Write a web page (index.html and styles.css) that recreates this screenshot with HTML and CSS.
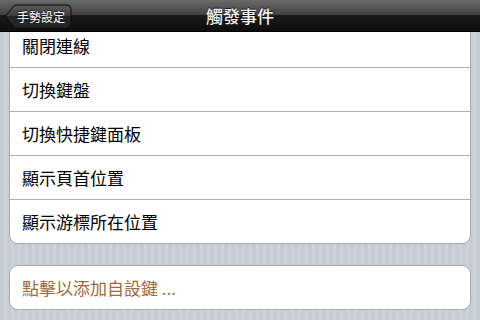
FILE: index.html
```html
<!DOCTYPE html>
<html lang="zh-Hant">
<head>
<meta charset="utf-8">
<link rel="stylesheet" href="styles.css">
</head>
<body>
<div class="screen">
  <header class="navbar">
    <button class="back">
      <svg class="back-shape" width="68" height="25" viewBox="0 0 68 25">
        <defs>
          <linearGradient id="bg" x1="0" y1="0" x2="0" y2="1">
            <stop offset="0" stop-color="#5a5a5a"/>
            <stop offset="0.5" stop-color="#3a3a3a"/>
            <stop offset="0.5" stop-color="#242424"/>
            <stop offset="1" stop-color="#262626"/>
          </linearGradient>
        </defs>
        <path d="M1.3 12.5 L10.8 1 H63 Q67 1 67 5 V20 Q67 24 63 24 H10.8 Z" fill="url(#bg)" stroke="#0b0b0b" stroke-width="1"/>
      </svg>
      <span class="back-label">手勢設定</span>
    </button>
    <h1 class="title">觸發事件</h1>
  </header>
  <main class="content">
    <ul class="group first">
      <li class="cell">關閉連線</li>
      <li class="cell">切換鍵盤</li>
      <li class="cell">切換快捷鍵面板</li>
      <li class="cell">顯示頁首位置</li>
      <li class="cell">顯示游標所在位置</li>
    </ul>
    <ul class="group second">
      <li class="cell add">點擊以添加自設鍵 ...</li>
    </ul>
  </main>
</div>
</body>
</html>
```
FILE: styles.css
```css
* { box-sizing: border-box; }
html, body {
  margin: 0;
  padding: 0;
  width: 480px;
  height: 320px;
  overflow: hidden;
  font-family: "Noto Sans CJK TC", "Noto Sans", sans-serif;
}
.screen {
  width: 480px;
  height: 320px;
  display: flex;
  flex-direction: column;
  background: repeating-linear-gradient(90deg, #c5ccd4 0 4px, #cbd2d9 4px 7px);
}
.navbar {
  position: relative;
  z-index: 2;
  height: 32px;
  flex: none;
  display: flex;
  align-items: center;
  justify-content: center;
  background: linear-gradient(#6a6a6a 0, #404040 48%, #1a1a1a 50%, #0e0e0e 100%);
  border-bottom: 1px solid #000;
}
.back {
  position: absolute;
  left: 4px;
  top: 4px;
  width: 68px;
  height: 25px;
  padding: 0;
  border: 0;
  background: none;
  display: flex;
  align-items: center;
}
.back-shape {
  position: absolute;
  left: 0;
  top: 0;
}
.back-label {
  position: relative;
  margin-left: 13px;
  color: #fff;
  font-size: 12px;
  font-weight: 400;
  line-height: 1;
  font-family: "Noto Sans CJK TC", sans-serif;
  text-shadow: 0 -1px 0 rgba(0,0,0,0.6);
}
.title {
  margin: 0;
  color: #f2f2f2;
  font-size: 17px;
  font-weight: 500;
  line-height: 1;
  text-shadow: 0 -1px 0 rgba(0,0,0,0.7);
}
.content {
  flex: 1;
  overflow: hidden;
  padding: 0 9px;
}
.group {
  list-style: none;
  margin: 0;
  padding: 0;
  background: #fff;
  border: 1px solid #a9abae;
  border-radius: 9px;
}
.group.first {
  margin-top: -9px;
}
.group.second {
  margin-top: 21px;
}
.cell {
  height: 44px;
  display: flex;
  align-items: center;
  padding-left: 12px;
  font-size: 17px;
  font-weight: 400;
  color: #000;
  border-bottom: 1px solid #adadb0;
}
.cell:last-child {
  border-bottom: 0;
  height: 43px;
}
.cell.add {
  color: #a26a38;
  height: 43px;
}
```
